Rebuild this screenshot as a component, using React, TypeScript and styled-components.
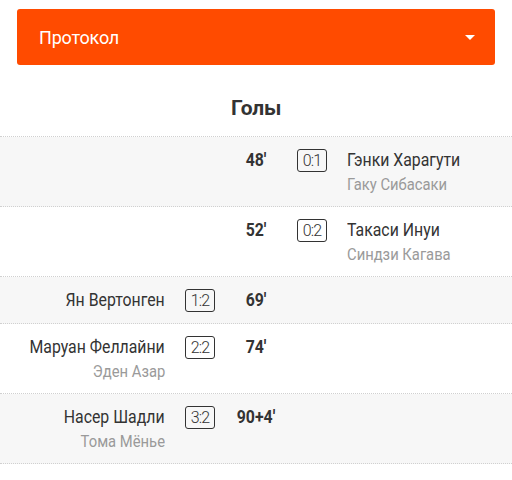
import React from "react";
import styled, { createGlobalStyle } from "styled-components";

const Global = createGlobalStyle`
  html, body { margin: 0; padding: 0; background: #fff; }
  body { font-family: Roboto, "Noto Sans", sans-serif; color: #333; }
`;

const Page = styled.div`
  width: 512px;
`;

const HeaderWrap = styled.div`
  padding: 9px 17px 0;
`;

const Dropdown = styled.div`
  height: 56px;
  background: #ff4b00;
  border-radius: 3px;
  display: flex;
  align-items: center;
  justify-content: space-between;
  padding: 0 20px 0 22px;
  color: #fff;
  font-size: 18px;
  letter-spacing: -0.2px;
`;

const Caret = styled.span`
  width: 0;
  height: 0;
  border-left: 5px solid transparent;
  border-right: 5px solid transparent;
  border-top: 5px solid #fff;
  margin-top: 1px;
`;

const Title = styled.h2`
  margin: 0;
  padding: 31px 0 16px;
  line-height: 24px;
  text-align: center;
  font-size: 21px;
  font-weight: 700;
  color: #333;
  letter-spacing: -0.2px;
`;

const List = styled.div`
  border-top: 1px dotted #d0d0d0;
`;

const Row = styled.div<{ $shade: boolean }>`
  display: grid;
  grid-template-columns: 1fr 30px 82px 30px 1fr;
  align-items: start;
  padding: 11px 0;
  background: ${(p) => (p.$shade ? "#f7f7f7" : "#fff")};
  border-bottom: 1px dotted #d0d0d0;
`;

const Players = styled.div<{ $side: "home" | "away" }>`
  display: flex;
  flex-direction: column;
  align-items: ${(p) => (p.$side === "home" ? "flex-end" : "flex-start")};
  ${(p) => (p.$side === "home" ? "padding-right: 20px;" : "padding-left: 20px;")}
`;

const Condensed = styled.div<{ $origin: string }>`
  white-space: nowrap;
  transform: scaleX(0.88);
  transform-origin: ${(p) => p.$origin};
`;

const Scorer = styled(Condensed)`
  font-size: 18px;
  line-height: 24px;
  color: #333;
`;

const Assist = styled(Condensed)`
  font-size: 17px;
  line-height: 23px;
  padding-top: 1px;
  margin-bottom: -1px;
  color: #9a9a9a;
  transform: scaleX(0.87);
`;

const Score = styled.div`
  margin-top: 1px;
  height: 23px;
  box-sizing: border-box;
  border: 1px solid #333;
  border-radius: 3px;
  display: flex;
  align-items: center;
  justify-content: center;
  font-size: 16px;
  font-weight: 300;
  color: #333;
  letter-spacing: -0.8px;
`;

const Minute = styled.div`
  text-align: center;
  font-size: 18px;
  line-height: 24px;
  font-weight: 700;
  color: #333;
  transform: scaleX(0.88);
`;

type Goal = {
  side: "home" | "away";
  minute: string;
  score: string;
  scorer: string;
  assist?: string;
};

const goals: Goal[] = [
  { side: "away", minute: "48'", score: "0:1", scorer: "Гэнки Харагути", assist: "Гаку Сибасаки" },
  { side: "away", minute: "52'", score: "0:2", scorer: "Такаси Инуи", assist: "Синдзи Кагава" },
  { side: "home", minute: "69'", score: "1:2", scorer: "Ян Вертонген" },
  { side: "home", minute: "74'", score: "2:2", scorer: "Маруан Феллайни", assist: "Эден Азар" },
  { side: "home", minute: "90+4'", score: "3:2", scorer: "Насер Шадли", assist: "Тома Мёнье" },
];

export default function App() {
  return (
    <Page>
      <Global />
      <HeaderWrap>
        <Dropdown>
          <span>Протокол</span>
          <Caret />
        </Dropdown>
      </HeaderWrap>
      <Title>Голы</Title>
      <List>
        {goals.map((g, i) => {
          const origin = g.side === "home" ? "right center" : "left center";
          const players = (
            <Players $side={g.side}>
              <Scorer $origin={origin}>{g.scorer}</Scorer>
              {g.assist && <Assist $origin={origin}>{g.assist}</Assist>}
            </Players>
          );
          return (
            <Row key={i} $shade={i % 2 === 0}>
              {g.side === "home" ? players : <div />}
              {g.side === "home" ? <Score>{g.score}</Score> : <div />}
              <Minute>{g.minute}</Minute>
              {g.side === "away" ? <Score>{g.score}</Score> : <div />}
              {g.side === "away" ? players : <div />}
            </Row>
          );
        })}
      </List>
    </Page>
  );
}
